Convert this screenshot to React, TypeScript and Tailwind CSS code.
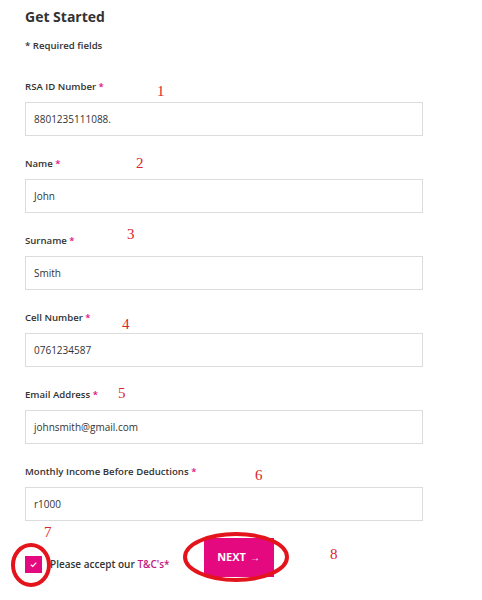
import React from "react"

const FIELDS = [
    { label: "RSA ID Number", value: "8801235111088." },
    { label: "Name", value: "John" },
    { label: "Surname", value: "Smith" },
    { label: "Cell Number", value: "0761234587" },
    { label: "Email Address", value: "johnsmith@gmail.com" },
    { label: "Monthly Income Before Deductions", value: "r1000" },
]

// hand-drawn annotation numbers over the form
const MARKS = [
    { n: "1", x: "left-[157px] top-[81px]" },
    { n: "2", x: "left-[136px] top-[153px]" },
    { n: "3", x: "left-[127px] top-[224px]" },
    { n: "4", x: "left-[122px] top-[314px]" },
    { n: "5", x: "left-[118px] top-[383px]" },
    { n: "6", x: "left-[255px] top-[465px]" },
    { n: "7", x: "left-[44px] top-[522px]" },
    { n: "8", x: "left-[330px] top-[544px]" },
]

const Field = ({ label, value }: { label: string; value: string }) => (
    <div className="mb-[21px]">
        <label className="block h-[14px] text-[9.6px] leading-[14px] font-semibold text-[#333]">
            {label} <span className="text-[#e5097f]">*</span>
        </label>
        <div className="mt-[8px] flex h-[34px] w-[398px] items-center border border-[#dcdcdc] bg-white px-[8px] text-[10px] text-[#333]">
            {value}
        </div>
    </div>
)

export default function App() {
    return (
        <div className="relative h-[600px] w-[482px] overflow-hidden bg-white font-['Open_Sans',sans-serif]">
            <div className="px-[25px] pt-[7px]">
                <h1 className="h-[20px] text-[14px] leading-[20px] font-bold text-[#333]">Get Started</h1>
                <p className="mt-[12px] h-[14px] text-[9.6px] leading-[14px] font-semibold text-[#333]">* Required fields</p>

                <div className="mt-[27px]">
                    {FIELDS.map((f) => (
                        <Field key={f.label} {...f} />
                    ))}
                </div>

                <div className="-mt-[4px] flex items-start">
                    <div className="mt-[18px] flex items-center">
                        <span className="flex h-[17px] w-[17px] items-center justify-center bg-[#e5097f]">
                            <svg width="9" height="9" viewBox="0 0 10 10" fill="none" stroke="white" strokeWidth="1.4">
                                <path d="M2 5.2 4.2 7.2 8 3" />
                            </svg>
                        </span>
                        <span className="ml-[8px] text-[10px] font-semibold text-[#333]">
                            Please accept our <span className="text-[#c4177f]">T&amp;C's*</span>
                        </span>
                    </div>
                    <button className="ml-[34px] flex h-[39px] w-[70px] items-center justify-center bg-[#e5097f] text-[11px] font-bold text-white">
                        NEXT <span className="ml-[4px] text-[10px]">&rarr;</span>
                    </button>
                </div>
            </div>

            {MARKS.map((m) => (
                <span
                    key={m.n}
                    className={`absolute ${m.x} font-['Liberation_Serif',serif] text-[15px] leading-[20px] text-[#d9262e]`}
                >
                    {m.n}
                </span>
            ))}

            <svg className="pointer-events-none absolute left-0 top-0" width="482" height="600">
                <ellipse cx="31" cy="565" rx="18" ry="20" fill="none" stroke="#e3141c" strokeWidth="4" />
                <ellipse cx="236" cy="557" rx="51" ry="23" fill="none" stroke="#e3141c" strokeWidth="4" />
            </svg>
        </div>
    )
}
